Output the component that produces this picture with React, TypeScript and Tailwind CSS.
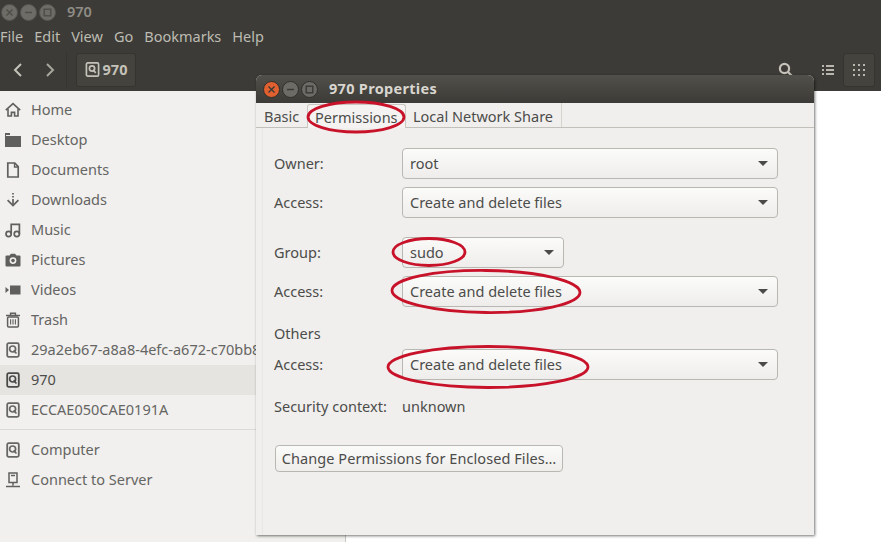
import type { ReactNode } from "react";

const FONT = "font-['Noto_Sans',sans-serif]";

function Drive({ dark }: { dark?: boolean }) {
  const c = dark ? "#4a4a48" : "#666664";
  return (
    <svg viewBox="0 0 16 16" className="w-4 h-4">
      <rect x="2.2" y="1.2" width="11.6" height="13.6" rx="1.5" fill="none" stroke={c} strokeWidth="1.8" />
      <circle cx="7.6" cy="7" r="3" fill="none" stroke={c} strokeWidth="1.7" />
      <path d="M8.5 8.5l3 3" stroke={c} strokeWidth="1.7" />
    </svg>
  );
}

const gray = "#5f5f5d";

const icons: Record<string, ReactNode> = {
  home: (
    <svg viewBox="0 0 16 16" className="w-4 h-4" fill="none" stroke={gray} strokeWidth="1.6">
      <path d="M0.8 8.2L8 1.6l7.2 6.6" />
      <path d="M3 7v7h3.4v-3.6h3.2V14H13V7" />
    </svg>
  ),
  desktop: (
    <svg viewBox="0 0 16 16" className="w-4 h-4" fill={gray}>
      <path d="M0 1h5v2H0z" />
      <path d="M0 4h16v11H0z" />
      <path d="M0 2h1v13H0z" />
    </svg>
  ),
  doc: (
    <svg viewBox="0 0 16 16" className="w-4 h-4" fill="none" stroke={gray} strokeWidth="1.7">
      <path d="M2.8 1h7l3.4 3.6V15H2.8z" />
      <path d="M9.5 1v4h3.7" strokeWidth="1.3" />
    </svg>
  ),
  download: (
    <svg viewBox="0 0 16 16" className="w-4 h-4" fill="none" stroke={gray} strokeWidth="1.7">
      <path d="M8 1v1.4M8 4v1.4M8 7v5" />
      <path d="M2.6 8.2L8 13.6l5.4-5.4" />
    </svg>
  ),
  music: (
    <svg viewBox="0 0 16 16" className="w-4 h-4" fill="none" stroke={gray} strokeWidth="1.7">
      <circle cx="3.6" cy="12" r="2.6" />
      <circle cx="11.8" cy="12" r="2.6" />
      <path d="M6.2 12V2.4h8.2V12" />
    </svg>
  ),
  camera: (
    <svg viewBox="0 0 16 16" className="w-4 h-4">
      <path fillRule="evenodd" fill={gray} d="M1.5 3.5h3L6 1.8h4l1.5 1.7h3A1 1 0 0 1 15.5 4.5v9a1 1 0 0 1-1 1h-13a1 1 0 0 1-1-1v-9a1 1 0 0 1 1-1zM8 5.2a3.4 3.4 0 1 0 0 6.8 3.4 3.4 0 0 0 0-6.8z" />
      <circle cx="8" cy="8.6" r="1.8" fill={gray} />
    </svg>
  ),
  video: (
    <svg viewBox="0 0 16 16" className="w-4 h-4" fill={gray}>
      <path d="M5 3.5h10.5v9H5z" />
      <path d="M0.5 5l3.5 3-3.5 3z" />
    </svg>
  ),
  trash: (
    <svg viewBox="0 0 16 16" className="w-4 h-4" fill="none" stroke={gray} strokeWidth="1.5">
      <path d="M1 3.4h14M5.6 3V1.2h4.8V3" />
      <rect x="2.6" y="5" width="10.8" height="10" rx="1" />
      <path d="M5.6 7.2v5.4M8 7.2v5.4M10.4 7.2v5.4" strokeWidth="1.1" />
    </svg>
  ),
  server: (
    <svg viewBox="0 0 16 16" className="w-4 h-4" fill="none" stroke={gray} strokeWidth="1.5">
      <rect x="4" y="1" width="8" height="9.5" />
      <path d="M6 3.5h4M8 10.5v3M1 14.4h14" />
    </svg>
  ),
};

function SideRow({ icon, label, active }: { icon: ReactNode; label: string; active?: boolean }) {
  return (
    <div className={`h-[30px] flex items-center pl-[5px] whitespace-nowrap ${active ? "bg-[#e5e4e1]" : ""}`}>
      <span className="w-4 h-4 shrink-0 flex">{icon}</span>
      <span className={`ml-[10px] text-[14.5px] ${active ? "text-[#4c4c4a]" : "text-[#656563]"}`}>{label}</span>
    </div>
  );
}

function Dot({ color, glyph, dim }: { color: string; glyph: "x" | "-" | "o"; dim?: boolean }) {
  return (
    <span className={`w-[17px] h-[17px] rounded-full flex items-center justify-center border ${dim ? "border-[#55544f]" : "border-[#2f2e2a]"} ${color}`}>
      <svg viewBox="0 0 9 9" className="w-[9px] h-[9px]" fill="none" stroke={dim ? "#4e4d48" : "#3a3936"} strokeWidth="1.4">
        {glyph === "x" && <path d="M1.5 1.5l6 6M7.5 1.5l-6 6" />}
        {glyph === "-" && <path d="M1 4.5h7" />}
        {glyph === "o" && <rect x="1.2" y="1.2" width="6.6" height="6.6" />}
      </svg>
    </span>
  );
}

function Combo({ value, className }: { value: string; className: string }) {
  return (
    <div className={`h-[31px] flex items-center justify-between pl-[7px] pr-[9px] rounded-[4px] border border-[#b9b7b1] bg-gradient-to-b from-[#fbfbfa] to-[#eeedeb] text-[14.5px] text-[#4c4c4a] ${className}`}>
      <span>{value}</span>
      <span className="w-0 h-0 border-x-[5px] border-x-transparent border-t-[5px] border-t-[#4a4a48]" />
    </div>
  );
}

function Label({ children, className = "" }: { children: ReactNode; className?: string }) {
  return <span className={`w-[128px] shrink-0 text-[14.5px] text-[#4c4c4a] ${className}`}>{children}</span>;
}

function PropertiesDialog() {
  return (
    <div className="absolute left-[256px] top-[75px] w-[558px] h-[460px] bg-[#f0efed] rounded-t-[6px] shadow-[1px_1px_3px_rgba(0,0,0,0.55)] flex flex-col">
      <div className="h-[28px] shrink-0 flex items-center pl-[7px] gap-[2px] rounded-t-[6px] bg-gradient-to-b from-[#51504a] to-[#3c3b37]">
        <Dot color="bg-[#e0602f]" glyph="x" />
        <Dot color="bg-[#6c6b66]" glyph="-" />
        <Dot color="bg-[#6c6b66]" glyph="o" />
        <span className="ml-[9px] text-[14.5px] font-bold tracking-[0.3px] text-[#d8d6cf]">970 Properties</span>
      </div>

      <div className="h-[25px] shrink-0 flex items-end border-b border-[#c2c0ba] text-[14.5px] text-[#4c4c4a]">
        <span className="w-[51px] h-full pl-[8px] leading-[27px]">Basic</span>
        <span className="w-[99px] h-full pl-[7px] leading-[25px] border-x border-t border-[#c9c7c1] rounded-t-[3px] bg-[#f4f3f1] -mb-px">Permissions</span>
        <span className="w-[156px] h-full pl-[7px] leading-[27px] border-r border-[#d6d4cf]">Local Network Share</span>
      </div>

      <div className="flex-1 ml-[6px] pl-[11px] pt-[20px] flex flex-col border-l border-[#e8e7e4]">
        <div className="flex items-center">
          <Label>Owner:</Label>
          <Combo value="root" className="w-[376px]" />
        </div>
        <div className="flex items-center mt-[8px]">
          <Label>Access:</Label>
          <Combo value="Create and delete files" className="w-[376px]" />
        </div>
        <div className="flex items-center mt-[19px]">
          <Label>Group:</Label>
          <Combo value="sudo" className="w-[162px]" />
        </div>
        <div className="flex items-center mt-[8px]">
          <Label>Access:</Label>
          <Combo value="Create and delete files" className="w-[376px]" />
        </div>
        <div className="mt-[17px] h-[20px] flex items-center">
          <Label>Others</Label>
        </div>
        <div className="flex items-center mt-[5px]">
          <Label>Access:</Label>
          <Combo value="Create and delete files" className="w-[376px]" />
        </div>
        <div className="flex items-center mt-[17px] h-[20px] text-[14.5px] text-[#4c4c4a]">
          <Label>Security context:</Label>
          <span>unknown</span>
        </div>
        <button className="mt-[28px] w-[288px] h-[27px] ml-px rounded-[4px] border border-[#b9b7b1] bg-gradient-to-b from-[#fbfbfa] to-[#eeedeb] text-[14.5px] tracking-[0.07px] text-[#4c4c4a] text-center">
          Change Permissions for Enclosed Files…
        </button>
      </div>

      {/* hand drawn red marks from the screenshot author */}
      <svg className="absolute left-0 top-0 w-[558px] h-[460px] pointer-events-none" viewBox="0 0 558 460" fill="none" stroke="#c8122a" strokeWidth="2.8">
        <ellipse cx="100" cy="42" rx="48" ry="15" />
        <ellipse cx="173" cy="177" rx="36" ry="13.5" />
        <ellipse cx="230" cy="216.5" rx="94" ry="21" transform="rotate(0.6 230 216.5)" />
        <ellipse cx="232" cy="292" rx="100" ry="20.5" />
      </svg>
    </div>
  );
}

export default function App() {
  return (
    <div className={`relative w-[881px] h-[542px] overflow-hidden flex flex-col bg-white ${FONT}`}>
      {/* Header */}
      <div className="h-[91px] shrink-0 bg-[#3c3b37] text-[#bdbbb2]">
        <div className="h-[24px] flex items-center pl-[1px] gap-[2px]">
          <Dot dim color="bg-[#6d6c66]" glyph="x" />
          <Dot dim color="bg-[#6d6c66]" glyph="-" />
          <Dot dim color="bg-[#6d6c66]" glyph="o" />
          <span className="ml-[9px] text-[14.5px] font-semibold text-[#8f8d85]">970</span>
        </div>
        <div className="h-[26px] flex items-center gap-[11px] text-[14.5px]">
          <span>File</span>
          <span>Edit</span>
          <span>View</span>
          <span>Go</span>
          <span>Bookmarks</span>
          <span>Help</span>
        </div>
        <div className="h-[41px] flex items-center pb-[2px]">
          <div className="w-[67px] h-[34px] flex items-center justify-around pl-[2px] border-r border-[#35342f]">
            <svg viewBox="0 0 12 16" className="w-3 h-4" fill="none" stroke="#c4c2b9" strokeWidth="2"><path d="M9 2L3 8l6 6" /></svg>
            <svg viewBox="0 0 12 16" className="w-3 h-4" fill="none" stroke="#a8a69d" strokeWidth="2"><path d="M3 2l6 6-6 6" /></svg>
          </div>
          <div className="ml-[9px] w-[60px] h-[34px] flex items-center justify-center gap-[3px] rounded-[3px] border border-[#35342f] bg-[#44433e] text-[14.5px] font-bold text-[#c4c2b9]">
            <svg viewBox="0 0 16 16" className="w-[15px] h-[15px]" fill="none" stroke="#c4c2b9" strokeWidth="1.8">
              <rect x="1.5" y="1" width="13" height="14" rx="1.5" />
              <circle cx="7.5" cy="7" r="2.8" />
              <path d="M8.5 8.5l3 3" />
            </svg>
            970
          </div>
          <div className="ml-auto flex items-center pr-[6px]">
            <div className="w-[30px] h-[34px] flex items-center justify-center mr-[12px]">
              <svg viewBox="0 0 16 16" className="w-4 h-4" fill="none" stroke="#c4c2b9" strokeWidth="2.2">
                <circle cx="6.5" cy="6.5" r="4.6" />
                <path d="M10 10l5 5" />
              </svg>
            </div>
            <div className="w-[30px] h-[34px] flex items-center justify-center">
              <svg viewBox="0 0 12 10" className="w-3 h-[10px]" fill="#b8b6ad">
                <path d="M0 0h2v2H0zM4 0h8v2H4zM0 4h2v2H0zM4 4h8v2H4zM0 8h2v2H0zM4 8h8v2H4z" />
              </svg>
            </div>
            <div className="w-[32px] h-[34px] flex items-center justify-center rounded-[3px] border border-[#35342f] bg-[#44433e]">
              <svg viewBox="0 0 12 12" className="w-3 h-3" fill="#b8b6ad">
                <path d="M0 0h2v2H0zM5 0h2v2H5zM10 0h2v2h-2zM0 5h2v2H0zM5 5h2v2H5zM10 5h2v2h-2zM0 10h2v2H0zM5 10h2v2H5zM10 10h2v2h-2z" />
              </svg>
            </div>
          </div>
        </div>
      </div>

      {/* Body */}
      <div className="flex-1 flex min-h-0">
        <div className="w-[346px] shrink-0 bg-[#f1f0ee] border-r border-[#c6c4bf] pt-[4px]">
          <SideRow icon={icons.home} label="Home" />
          <SideRow icon={icons.desktop} label="Desktop" />
          <SideRow icon={icons.doc} label="Documents" />
          <SideRow icon={icons.download} label="Downloads" />
          <SideRow icon={icons.music} label="Music" />
          <SideRow icon={icons.camera} label="Pictures" />
          <SideRow icon={icons.video} label="Videos" />
          <SideRow icon={icons.trash} label="Trash" />
          <SideRow icon={<Drive />} label="29a2eb67-a8a8-4efc-a672-c70bb8" />
          <SideRow icon={<Drive dark />} label="970" active />
          <SideRow icon={<Drive />} label="ECCAE050CAE0191A" />
          <div className="h-[10px] flex items-start pt-[4px]">
            <div className="w-full h-px bg-[#dbdad6]" />
          </div>
          <SideRow icon={<Drive />} label="Computer" />
          <SideRow icon={icons.server} label="Connect to Server" />
        </div>
        <div className="flex-1 bg-white" />
      </div>

      <PropertiesDialog />
    </div>
  );
}
